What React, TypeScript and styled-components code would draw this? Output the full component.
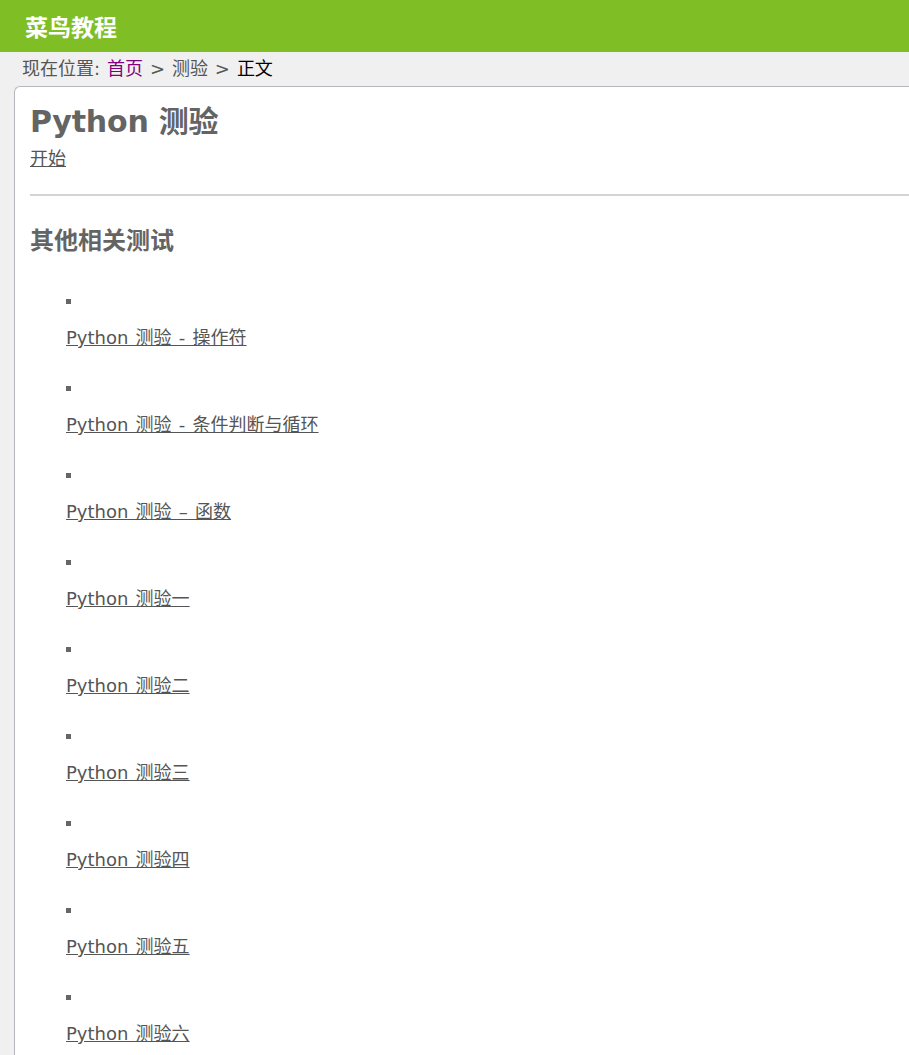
import styled, { createGlobalStyle } from 'styled-components';
import React from 'react';

const GlobalStyle = createGlobalStyle`
  html, body {
    margin: 0;
    padding: 0;
    background: #f0f0f0;
    font-family: "DejaVu Sans", "Noto Sans CJK SC", sans-serif;
    overflow-x: hidden;
  }
`

const Header = styled.header`
  height: 52px;
  background: #80be26;
  padding-left: 25px;
  display: flex;
  align-items: center;
  > h1{
    margin: 0;
    font-family: "Noto Sans CJK SC", sans-serif;
    font-size: 23px;
    font-weight: 700;
    color: #fff;
    line-height: 52px;
  }
`

const Crumbs = styled.nav`
  height: 34px;
  line-height: 34px;
  font-size: 18px;
  color: #555;
  padding-left: 22px;
  word-spacing: 1.2px;
  > a{
    text-decoration: none;
    color: #555;
    &.home{ color: #800080; }
  }
  > .current{ color: #000; }
`

const Card = styled.article`
  margin-left: 14px;
  background: #fff;
  border: 1px solid #b4b8bc;
  border-right: none;
  border-bottom: none;
  border-top-left-radius: 6px;
  padding: 0 0 40px 15px;
  color: #666;
`

const Title = styled.h1`
  margin: 17px 0 0;
  font-size: 30px;
  line-height: 36px;
  font-weight: 700;
  color: #646464;
  letter-spacing: -0.2px;
`

const TextLink = styled.a`
  display: inline-block;
  font-size: 18px;
  line-height: 24px;
  color: #555;
  text-decoration: underline;
  word-spacing: 1.5px;
`

const StartRow = styled.div`
  margin-top: 7px;
`

const Rule = styled.hr`
  margin: 23px 0 0;
  border: none;
  border-top: 2px solid #d4d4d4;
  height: 0;
`

const SubTitle = styled.h2`
  margin: 30px 0 0;
  font-size: 24px;
  line-height: 30px;
  font-weight: 700;
  color: #646464;
`

const List = styled.ul`
  list-style: none;
  margin: 31px 0 0;
  padding: 0 0 0 36px;
`

const Item = styled.li`
  display: flex;
  flex-direction: column;
  align-items: flex-start;
  padding-top: 12px;
  margin-bottom: 24px;
`

const Marker = styled.span`
  width: 5px;
  height: 5px;
  background: #666;
  margin-bottom: 22px;
`

const tests = [
  'Python 测验 - 操作符',
  'Python 测验 - 条件判断与循环',
  'Python 测验 – 函数',
  'Python 测验一',
  'Python 测验二',
  'Python 测验三',
  'Python 测验四',
  'Python 测验五',
  'Python 测验六',
]

const App: React.FC = () => {
  return (
    <>
      <GlobalStyle/>
      <Header>
        <h1>菜鸟教程</h1>
      </Header>
      <Crumbs>
        现在位置: <a className="home" href="#">首页</a> &gt; <a href="#">测验</a> &gt; <span className="current">正文</span>
      </Crumbs>
      <Card>
        <Title>Python 测验</Title>
        <StartRow>
          <TextLink href="#">开始</TextLink>
        </StartRow>
        <Rule/>
        <SubTitle>其他相关测试</SubTitle>
        <List>
          {tests.map(t => (
            <Item key={t}>
              <Marker/>
              <TextLink href="#">{t}</TextLink>
            </Item>
          ))}
        </List>
      </Card>
    </>
  )
}

export default App
